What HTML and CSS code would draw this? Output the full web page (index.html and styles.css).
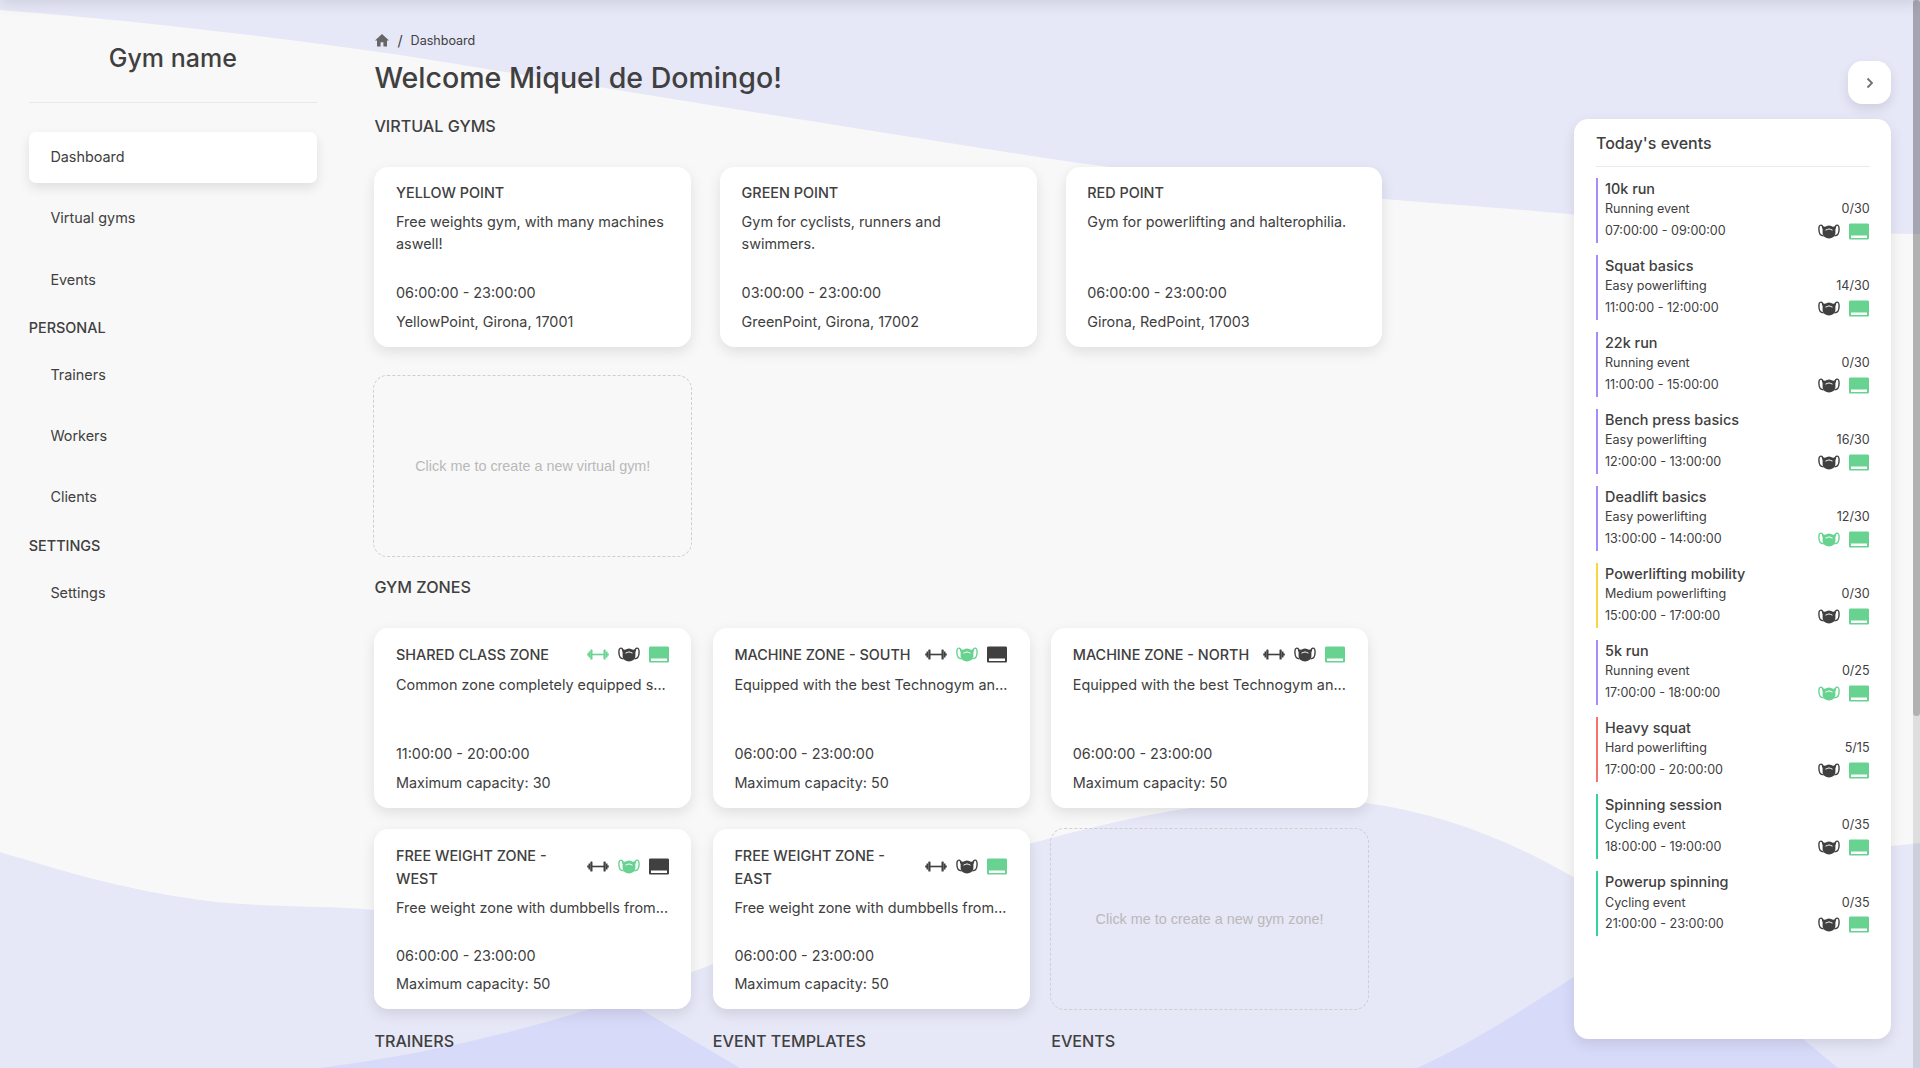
FILE: index.html
```html
<!DOCTYPE html>
<html lang="en">
<head>
<meta charset="utf-8">
<title>Gym dashboard</title>
<link rel="stylesheet" href="styles.css">
</head>
<body>
<svg class="defs" width="0" height="0" aria-hidden="true">
  <symbol id="dumbbell" viewBox="0 0 22 17">
    <path d="M4 7.700h14v1.600H4z"/>
    <rect x="3.300" y="3.400" width="2.200" height="10.200" rx=".7"/><rect x="16.500" y="3.400" width="2.200" height="10.200" rx=".7"/>
    <path d="M1.500 5.400h1.800v6.200H1.500V9.500H.2v-2h1.300zM20.500 5.400h-1.800v6.200h1.800V9.500h1.300v-2h-1.300z"/>
  </symbol>
  <symbol id="mask" viewBox="0 0 22 17">
    <path d="M4.600 3C6.500 4.200 7.800 3.700 8.800 3.100c1.300-.8 3.100-.8 4.400 0 1 .6 2.300 1.100 4.200-.1V10c0 3.400-3.200 5.400-6.400 5.400S4.600 13.400 4.600 10z"/>
    <path class="line" d="M4.700 5.500C4.900 3.200 4.100 2.100 2.900 2.100 1.300 2.100.9 4 .9 6.200c0 3.600 1.300 6.500 4.700 6.700M17.300 5.500c-.2-2.300.6-3.400 1.800-3.400 1.600 0 2 1.900 2 4.100 0 3.600-1.300 6.500-4.700 6.700"/>
    <path class="cut" d="M7.900 7.100c1.200-.1 1.700-1.200 3.100-1.200s1.900 1.100 3.100 1.200"/>
  </symbol>
  <symbol id="dock" viewBox="0 0 20 17">
    <path fill-rule="evenodd" d="M1.400.4h17.200c.8 0 1.400.6 1.400 1.400v13.400c0 .8-.6 1.400-1.400 1.400H1.400C.6 16.600 0 16 0 15.200V1.800C0 1 .6.4 1.400.4zM2 12.600v2.400h16v-2.400z"/>
  </symbol>
</svg>

<svg class="waves" viewBox="0 0 1920 1068" aria-hidden="true">
  <path class="light" d="M0 10C130 20 260 35 400 55C600 87 800 120 1000 151C1120 170 1260 187 1384 199C1450 205 1510 208 1574 214.500C1690 226 1800 233 1920 234V0H0z"/>
  <path class="light" d="M0 852C60 870 120 889 200 900C260 908 320 905 374 910C480 922 560 985 640 984C665 983 690 973 713 964C820 920 920 870 1040 841C1150 811 1260 790 1366 803C1440 813 1510 840 1574 877.500C1690 935 1780 860 1891 846L1920 843V1068H0z"/>
  <path class="deep" d="M321 1068Q460 1050 590 1009Q616 992 640 1009L740 1068z"/>
  <path class="deep" d="M1417 1068C1475 1042 1525 1008 1574 977C1650 930 1710 965 1803 1039L1838 1068z"/>
</svg>
<div class="topbar"></div>

<div class="layout">
  <nav class="sidebar">
    <h2 class="brand">Gym name</h2>
    <a class="nav-item active">Dashboard</a>
    <a class="nav-item">Virtual gyms</a>
    <a class="nav-item">Events</a>
    <p class="nav-label">PERSONAL</p>
    <a class="nav-item">Trainers</a>
    <a class="nav-item">Workers</a>
    <a class="nav-item">Clients</a>
    <p class="nav-label">SETTINGS</p>
    <a class="nav-item">Settings</a>
  </nav>

  <main class="content">
    <div class="crumbs"><svg class="home" viewBox="0 0 14 13"><path d="M7 0 0 6.500h2V12.500h3.600V8.300h2.800v4.200H12V6.500h2z"/></svg><span class="slash">/</span><span>Dashboard</span></div>
    <h1>Welcome Miquel de Domingo!</h1>

    <h3 class="section">VIRTUAL GYMS</h3>
    <div class="grid gyms">
      <article class="card"><h4>YELLOW POINT</h4><p class="desc">Free weights gym, with many machines aswell!</p><p class="time">06:00:00 - 23:00:00</p><p>YellowPoint, Girona, 17001</p></article>
      <article class="card"><h4>GREEN POINT</h4><p class="desc">Gym for cyclists, runners and swimmers.</p><p class="time">03:00:00 - 23:00:00</p><p>GreenPoint, Girona, 17002</p></article>
      <article class="card"><h4>RED POINT</h4><p class="desc">Gym for powerlifting and halterophilia.</p><p class="time">06:00:00 - 23:00:00</p><p>Girona, RedPoint, 17003</p></article>
      <button class="create">Click me to create a new virtual gym!</button>
    </div>

    <h3 class="section">GYM ZONES</h3>
    <div class="grid zones">
      <article class="card"><header><h4>SHARED CLASS ZONE</h4><span class="icons"><svg class="ic on"><use href="#dumbbell"/></svg><svg class="ic"><use href="#mask"/></svg><svg class="ic dock on"><use href="#dock"/></svg></span></header><p class="desc clip">Common zone completely equipped s...</p><p class="time">11:00:00 - 20:00:00</p><p>Maximum capacity: 30</p></article>
      <article class="card"><header><h4>MACHINE ZONE - SOUTH</h4><span class="icons"><svg class="ic"><use href="#dumbbell"/></svg><svg class="ic on"><use href="#mask"/></svg><svg class="ic dock"><use href="#dock"/></svg></span></header><p class="desc clip">Equipped with the best Technogym an...</p><p class="time">06:00:00 - 23:00:00</p><p>Maximum capacity: 50</p></article>
      <article class="card"><header><h4>MACHINE ZONE - NORTH</h4><span class="icons"><svg class="ic"><use href="#dumbbell"/></svg><svg class="ic"><use href="#mask"/></svg><svg class="ic dock on"><use href="#dock"/></svg></span></header><p class="desc clip">Equipped with the best Technogym an...</p><p class="time">06:00:00 - 23:00:00</p><p>Maximum capacity: 50</p></article>
      <article class="card"><header><h4>FREE WEIGHT ZONE - WEST</h4><span class="icons"><svg class="ic"><use href="#dumbbell"/></svg><svg class="ic on"><use href="#mask"/></svg><svg class="ic dock"><use href="#dock"/></svg></span></header><p class="desc clip">Free weight zone with dumbbells from...</p><p class="time">06:00:00 - 23:00:00</p><p>Maximum capacity: 50</p></article>
      <article class="card"><header><h4>FREE WEIGHT ZONE - EAST</h4><span class="icons"><svg class="ic"><use href="#dumbbell"/></svg><svg class="ic"><use href="#mask"/></svg><svg class="ic dock on"><use href="#dock"/></svg></span></header><p class="desc clip">Free weight zone with dumbbells from...</p><p class="time">06:00:00 - 23:00:00</p><p>Maximum capacity: 50</p></article>
      <button class="create">Click me to create a new gym zone!</button>
    </div>

    <div class="grid zones">
      <h3 class="section">TRAINERS</h3>
      <h3 class="section">EVENT TEMPLATES</h3>
      <h3 class="section">EVENTS</h3>
    </div>
  </main>

  <aside class="today">
    <button class="toggle" aria-label="Collapse"><svg viewBox="0 0 8 12"><path d="M1.500 1.500 6 6l-4.500 4.500"/></svg></button>
    <section class="panel">
      <h3>Today's events</h3>
      <ul>
        <li class="easy"><h5>10k run</h5><div class="row"><span>Running event</span><span>0/30</span></div><div class="row times"><span>07:00:00 - 09:00:00</span><span class="icons"><svg class="ic"><use href="#mask"/></svg><svg class="ic dock on"><use href="#dock"/></svg></span></div></li>
        <li class="easy"><h5>Squat basics</h5><div class="row"><span>Easy powerlifting</span><span>14/30</span></div><div class="row times"><span>11:00:00 - 12:00:00</span><span class="icons"><svg class="ic"><use href="#mask"/></svg><svg class="ic dock on"><use href="#dock"/></svg></span></div></li>
        <li class="easy"><h5>22k run</h5><div class="row"><span>Running event</span><span>0/30</span></div><div class="row times"><span>11:00:00 - 15:00:00</span><span class="icons"><svg class="ic"><use href="#mask"/></svg><svg class="ic dock on"><use href="#dock"/></svg></span></div></li>
        <li class="easy"><h5>Bench press basics</h5><div class="row"><span>Easy powerlifting</span><span>16/30</span></div><div class="row times"><span>12:00:00 - 13:00:00</span><span class="icons"><svg class="ic"><use href="#mask"/></svg><svg class="ic dock on"><use href="#dock"/></svg></span></div></li>
        <li class="easy"><h5>Deadlift basics</h5><div class="row"><span>Easy powerlifting</span><span>12/30</span></div><div class="row times"><span>13:00:00 - 14:00:00</span><span class="icons"><svg class="ic on"><use href="#mask"/></svg><svg class="ic dock on"><use href="#dock"/></svg></span></div></li>
        <li class="medium"><h5>Powerlifting mobility</h5><div class="row"><span>Medium powerlifting</span><span>0/30</span></div><div class="row times"><span>15:00:00 - 17:00:00</span><span class="icons"><svg class="ic"><use href="#mask"/></svg><svg class="ic dock on"><use href="#dock"/></svg></span></div></li>
        <li class="easy"><h5>5k run</h5><div class="row"><span>Running event</span><span>0/25</span></div><div class="row times"><span>17:00:00 - 18:00:00</span><span class="icons"><svg class="ic on"><use href="#mask"/></svg><svg class="ic dock on"><use href="#dock"/></svg></span></div></li>
        <li class="hard"><h5>Heavy squat</h5><div class="row"><span>Hard powerlifting</span><span>5/15</span></div><div class="row times"><span>17:00:00 - 20:00:00</span><span class="icons"><svg class="ic"><use href="#mask"/></svg><svg class="ic dock on"><use href="#dock"/></svg></span></div></li>
        <li class="cycling"><h5>Spinning session</h5><div class="row"><span>Cycling event</span><span>0/35</span></div><div class="row times"><span>18:00:00 - 19:00:00</span><span class="icons"><svg class="ic"><use href="#mask"/></svg><svg class="ic dock on"><use href="#dock"/></svg></span></div></li>
        <li class="cycling"><h5>Powerup spinning</h5><div class="row"><span>Cycling event</span><span>0/35</span></div><div class="row times"><span>21:00:00 - 23:00:00</span><span class="icons"><svg class="ic"><use href="#mask"/></svg><svg class="ic dock on"><use href="#dock"/></svg></span></div></li>
      </ul>
    </section>
  </aside>
</div>
<div class="scrollbar"><div class="thumb"></div></div>
</body>
</html>
```
FILE: styles.css
```css
html { font-size: 14.4px; }
* { box-sizing: border-box; margin: 0; padding: 0; }
body {
  height: 1068px;
  overflow: hidden;
  position: relative;
  background: #f8f8f8;
  color: #404040;
  font-family: Inter, "Liberation Sans", sans-serif;
  font-size: 1rem;
  line-height: 1.5;
}
h1, h2, h3, h4, h5 { font-weight: 500; }
ul { list-style: none; }

.defs { position: absolute; }
.waves { position: absolute; inset: 0; width: 1920px; height: 1068px; }
.waves .light { fill: #e6e7f7; }
.waves .deep { fill: #d8daf9; }
.topbar { position: absolute; top: -20px; left: 0; right: 0; height: 20px; box-shadow: 0 4px 15px rgba(0, 0, 0, .1); }

.layout { position: relative; display: flex; height: 100%; padding: 0 2rem; }

/* Sidebar */
.sidebar { width: 20rem; flex: none; display: flex; flex-direction: column; gap: .75rem; }
.brand {
  height: 103px;
  padding-top: 39px;
  margin-bottom: 18.400px;
  border-bottom: 1px solid #e9e9e9;
  font-size: 25px;
  line-height: 38px;
  text-align: center;
}
.nav-item { height: 3.5rem; padding-left: 1.5rem; line-height: 3.5rem; border-radius: 7px; }
.nav-item.active { background: #fff; box-shadow: 0 5px 12px rgba(0, 0, 0, .1); }
.nav-label { height: 1.63rem; line-height: 1.63rem; font-weight: 500; }

/* Main column */
.content { flex: 1; min-width: 0; padding: 30px 0 0 57.600px; }
.crumbs { display: flex; align-items: center; height: 22px; font-size: 12.550px; }
.home { width: 14px; height: 13px; margin: 0 8px 1px 1px; fill: #666; }
.slash { margin-right: 8px; font-size: 14.400px; }
h1 { font-size: 28.560px; line-height: 42px; margin-top: 5px; }
.section { font-size: 16.150px; line-height: 24px; padding-top: 15px; margin-bottom: 29px; white-space: nowrap; }
.gyms + .section { padding-top: 19px; }
.zones + .zones .section { padding-top: 19.700px; }
.grid { display: grid; grid-template-columns: repeat(3, 22rem); }
.gyms { gap: 2rem; }
.zones { gap: 1.500rem; }
.card {
  height: 12.500rem;
  padding: 1rem 1.500rem;
  display: flex;
  flex-direction: column;
  background: #fff;
  border-radius: 14.400px;
  box-shadow: 0 5px 14px rgba(0, 0, 0, .1);
}
.card h4 { font-size: 1rem; line-height: 1.600; }
.card header { display: flex; align-items: center; justify-content: space-between; min-height: 25px; }
.desc { margin-top: .5rem; }
.gyms .desc { margin-top: .46rem; }
.clip { white-space: nowrap; }
.time { margin: auto 0 .5rem; }
.create {
  margin: -1px;
  border: 1px dashed #cfcfcf;
  border-radius: 14.400px;
  background: none;
  color: #b9b9b9;
  font: 14.400px "Liberation Sans", Arial, sans-serif;
}
.gyms .create, .zones .create { height: calc(12.500rem + 2px); }

.icons { display: flex; gap: 9px; flex: none; margin-right: 1px; }
.ic { width: 22px; height: 17px; fill: #404040; stroke: #404040; stroke-width: 0; }
.ic.on { fill: #68d391; stroke: #68d391; }
.ic.dock { width: 20px; }
.line { fill: none; stroke-width: 1.400px; }
.cut { fill: none; stroke: #fff; stroke-width: 1px; stroke-linecap: round; }

/* Events of the day */
.today { width: 22rem; flex: none; display: flex; flex-direction: column; padding: 61px 0 28.800px; }
.toggle {
  align-self: flex-end;
  width: 43.200px;
  height: 43.200px;
  margin-bottom: 14.800px;
  border: 0;
  border-radius: 14.400px;
  background: #fff;
  box-shadow: 0 5px 12px rgba(0, 0, 0, .1);
}
.toggle svg { width: 8px; height: 12px; display: block; margin: auto; fill: none; stroke: #707070; stroke-width: 1.800; }
.panel { flex: 1; padding: 0 1.500rem; background: #fff; border-radius: 14.400px; box-shadow: 0 5px 14px rgba(0, 0, 0, .1); }
.panel h3 { height: 48px; padding-top: 12px; font-size: 16px; line-height: 25px; border-bottom: 1px solid #ebebeb; margin-bottom: 11.200px; }
.panel li { height: 65px; margin-bottom: 12.030px; padding-left: 7px; border-left-width: 2px; border-left-style: solid; font-size: 12.550px; }
.panel h5 { font-size: 14.400px; line-height: 21.600px; color: #404040; }
.row { display: flex; justify-content: space-between; align-items: center; height: 20px; color: #404040; }
.row.times { height: 23px; }
.easy { border-color: #a78bfa; }
.medium { border-color: #f6d743; }
.hard { border-color: #f87171; }
.cycling { border-color: #34d399; }

.scrollbar { position: absolute; top: 0; right: 0; width: 7px; height: 1068px; background: rgba(0, 0, 0, .1); }
.thumb { height: 716px; border-radius: 4px; background: rgba(0, 0, 0, .2); }
```
